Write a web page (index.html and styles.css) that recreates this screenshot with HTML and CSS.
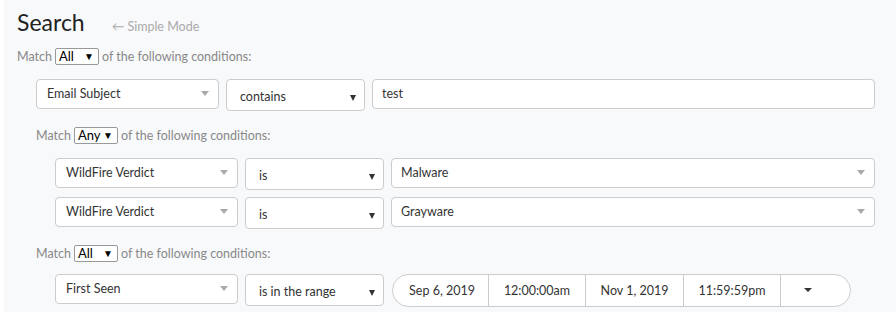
FILE: index.html
```html
<!DOCTYPE html>
<html lang="en">
<head>
  <meta charset="UTF-8">
  <title>Search</title>
  <link rel="stylesheet" href="styles.css">
</head>
<body>
  <div class="panel">
    <div class="header">
      <h1>Search</h1>
      <a class="mode-link">&larr; Simple Mode</a>
    </div>

    <div class="match"><span>Match</span><span class="mini-select">All<i>&#9660;</i></span><span>of the following conditions:</span></div>

    <div class="group">
      <div class="row">
        <div class="field picker">Email Subject<b class="caret light"></b></div>
        <div class="field operator">contains<b class="caret"></b></div>
        <div class="field value">test</div>
      </div>

      <div class="match"><span>Match</span><span class="mini-select">Any<i>&#9660;</i></span><span>of the following conditions:</span></div>
      <div class="group">
        <div class="row">
          <div class="field picker">WildFire Verdict<b class="caret light"></b></div>
          <div class="field operator">is<b class="caret"></b></div>
          <div class="field value">Malware<b class="caret light"></b></div>
        </div>
        <div class="row">
          <div class="field picker">WildFire Verdict<b class="caret light"></b></div>
          <div class="field operator">is<b class="caret"></b></div>
          <div class="field value">Grayware<b class="caret light"></b></div>
        </div>
      </div>

      <div class="match last"><span>Match</span><span class="mini-select">All<i>&#9660;</i></span><span>of the following conditions:</span></div>
      <div class="group">
        <div class="row">
          <div class="field picker">First Seen<b class="caret light"></b></div>
          <div class="field operator">is in the range<b class="caret"></b></div>
          <div class="range">
            <span class="cell date1">Sep 6, 2019</span>
            <span class="cell time1">12:00:00am</span>
            <span class="cell date2">Nov 1, 2019</span>
            <span class="cell time2">11:59:59pm</span>
            <span class="cell more"><b class="caret"></b></span>
          </div>
        </div>
      </div>
    </div>
  </div>
</body>
</html>
```

FILE: styles.css
```css
body {
  margin: 0;
  background: #ffffff;
  font-family: Lato, "Open Sans", sans-serif;
  color: #333;
  overflow: hidden;
}

.panel {
  margin-left: 4px;
  min-height: 312px;
  background: #f8f9fb;
  padding: 8px 21px 0 13px;
}

.header {
  display: flex;
  align-items: baseline;
  gap: 27px;
}

h1 {
  margin: 0;
  font-size: 23px;
  font-weight: 400;
  color: #222;
  line-height: 28px;
}

.mode-link {
  font-size: 12.5px;
  color: #aaa;
}

.match {
  display: flex;
  align-items: center;
  gap: 3px;
  margin-top: 10px;
  font-size: 12.5px;
  color: #888;
  height: 20px;
}

.mini-select {
  display: inline-flex;
  align-items: center;
  justify-content: space-between;
  box-sizing: border-box;
  width: 44px;
  height: 17px;
  padding: 0 4px 0 3px;
  background: #fff;
  border: 1px solid #999;
  border-radius: 2px;
  color: #000;
  font-size: 13px;
}

.mini-select i {
  font-style: normal;
  font-size: 10px;
}

.group {
  padding-left: 19px;
}

.row {
  display: flex;
  gap: 7px;
  margin-top: 7px;
}

.group > .row:first-child {
  margin-top: 16px;
}

.match + .group > .row:first-child {
  margin-top: 13px;
}

.row + .match {
  margin-top: 14px;
}

.match.last {
  margin-top: 14px;
}

.match.last + .group > .row:first-child {
  margin-top: 11px;
}

.field {
  position: relative;
  box-sizing: border-box;
  height: 30px;
  background: #fff;
  border: 1px solid #ccc;
  border-radius: 4px;
  font-size: 12.5px;
  color: #333;
  display: flex;
  align-items: center;
}

.picker {
  width: 183px;
  padding: 0 0 2px 10px;
}

.operator {
  width: 139px;
  height: 32px;
  padding: 2px 0 0 13px;
}

.value {
  flex: 1;
  padding: 0 0 1px 9px;
}

.caret {
  position: absolute;
  right: 9px;
  top: 50%;
  margin-top: -2px;
  width: 0;
  height: 0;
  border-left: 4px solid transparent;
  border-right: 4px solid transparent;
  border-top: 5px solid #333;
}

.caret.light {
  border-top-color: #aaa;
  margin-top: -3px;
}

.operator .caret {
  right: 8px;
  margin-top: 0;
  border-left-width: 3px;
  border-right-width: 3px;
  border-top-width: 6px;
}

.range {
  display: flex;
  box-sizing: border-box;
  width: 459px;
  height: 33px;
  margin-left: 1px;
  background: #fff;
  border: 1px solid #ccc;
  border-radius: 17px;
  font-size: 12.5px;
  color: #333;
}

.cell {
  position: relative;
  display: flex;
  align-items: center;
  justify-content: center;
  border-left: 1px solid #ccc;
  padding-bottom: 1px;
}

.date1 {
  width: 95px;
  border-left: none;
  padding-left: 3px;
  box-sizing: border-box;
}

.time1 { width: 96px; }
.date2 { width: 97px; }
.time2 { width: 96px; }
.more { flex: 1; }

.more .caret {
  position: static;
  margin: 0 16px 0 0;
  border-left-width: 4px;
  border-right-width: 4px;
  border-top-width: 4px;
}
```
